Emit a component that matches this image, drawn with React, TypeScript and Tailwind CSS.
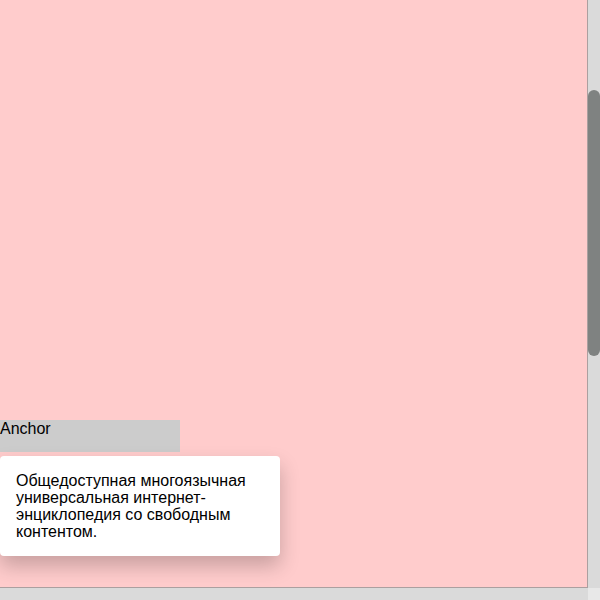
export default function App() {
  return (
    <div
      className="w-[600px] h-[600px] flex flex-col overflow-hidden bg-[#dadada] text-black"
      style={{ fontFamily: '"Liberation Sans", Arial, sans-serif' }}
    >
      <div className="flex h-[588px]">
        {/* scrolled content */}
        <div className="w-[588px] h-[588px] bg-[#ffcccc] border-r border-b border-[#ab9f9f] pt-[420px]">
          <div className="relative w-[180px] h-[32px] bg-[#cccccc] text-[16px] leading-[18px]">
            Anchor
            <div className="absolute left-0 top-[36px] w-[280px] bg-white rounded-[4px] p-4 text-[16px] leading-[17px] shadow-[0_10px_20px_rgba(0,0,0,0.22)]">
              Общедоступная многоязычная универсальная интернет-энциклопедия со свободным контентом.
            </div>
          </div>
        </div>
        {/* vertical scrollbar */}
        <div className="w-[12px] h-[587px] bg-[#dadada] pt-[90px]">
          <div className="w-[12px] h-[266px] bg-[#7f8281] rounded-[6px]" />
        </div>
      </div>
      {/* horizontal scrollbar */}
      <div className="flex h-[12px]">
        <div className="w-[588px] bg-[#dadada]" />
        <div className="w-[12px] bg-[#e8e8e8]" />
      </div>
    </div>
  );
}
